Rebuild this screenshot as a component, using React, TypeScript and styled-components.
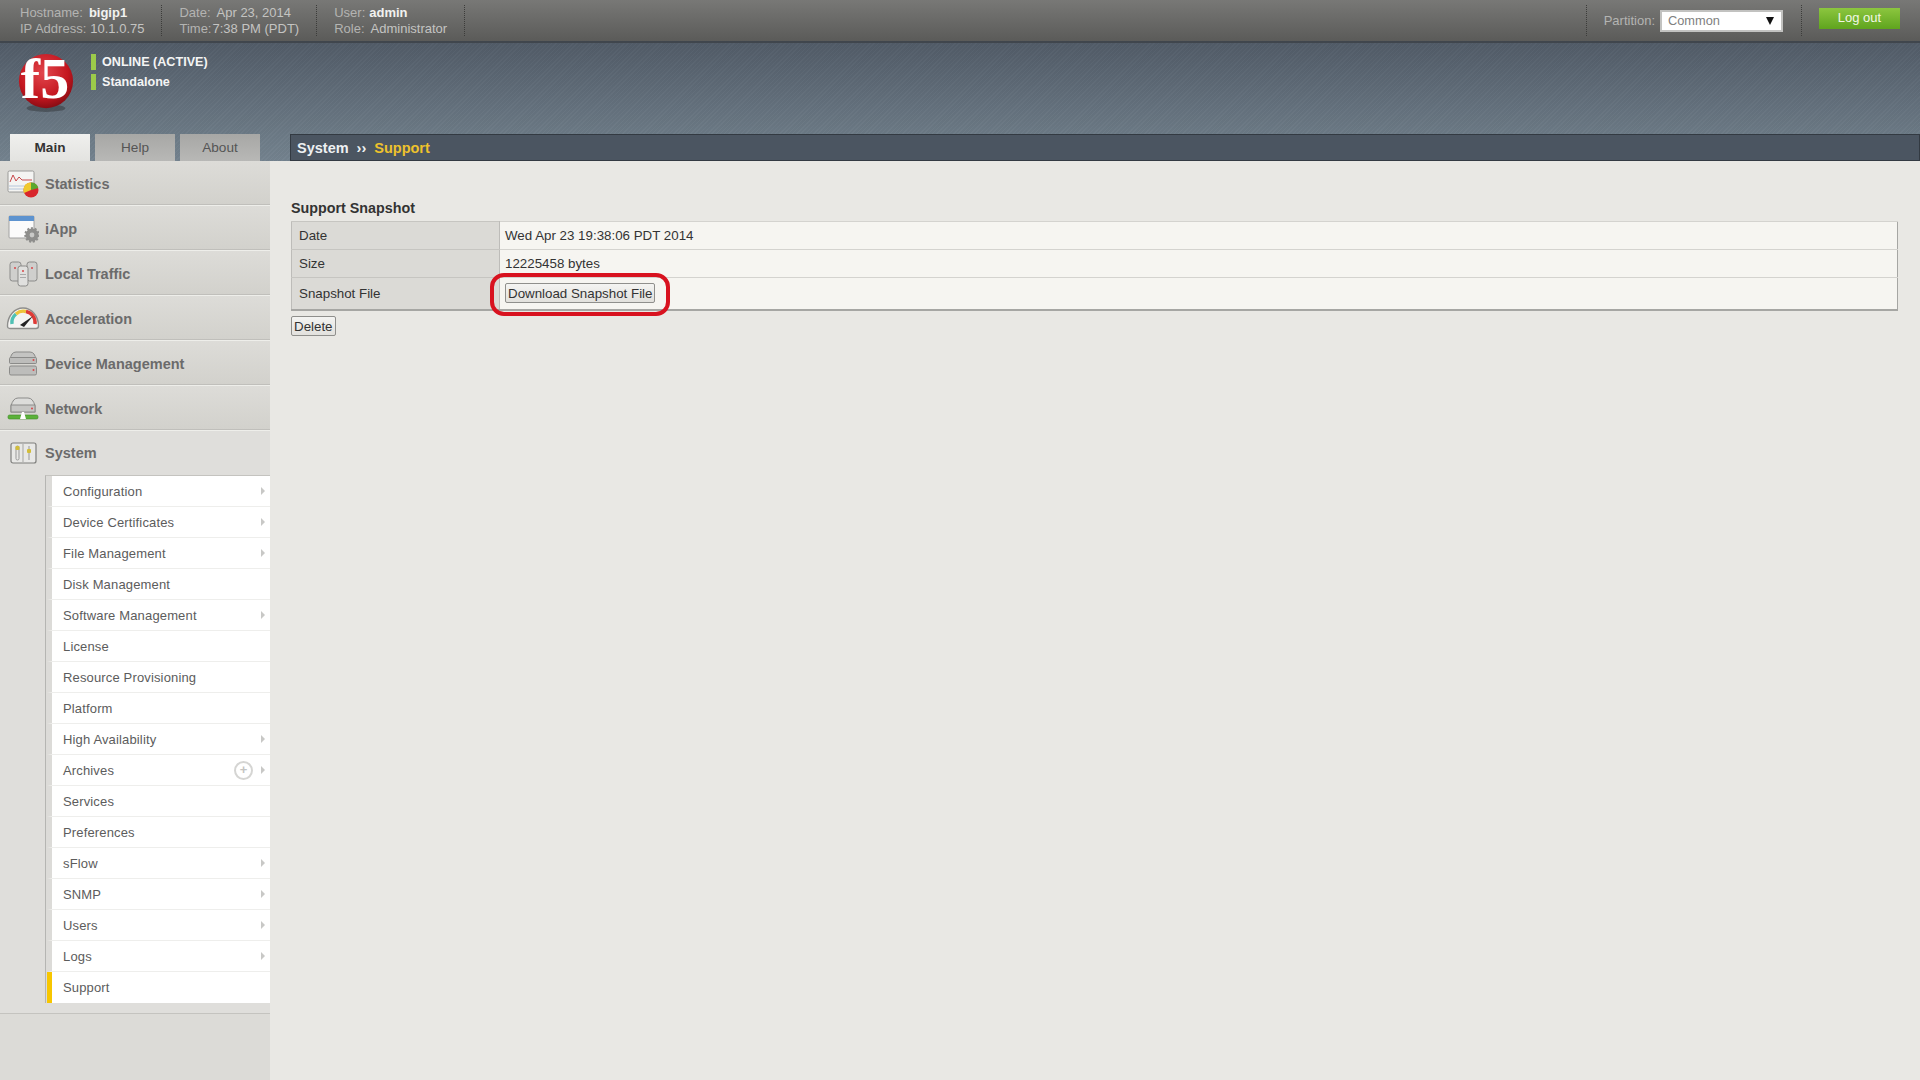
import React from 'react';
import styled, { createGlobalStyle } from 'styled-components';

const GlobalStyle = createGlobalStyle`
  html, body {
    margin: 0;
    padding: 0;
    background: #e9e8e4;
  }
  body {
    font-family: "Liberation Sans", Arial, sans-serif;
  }
`;

const stripes = `repeating-linear-gradient(135deg, rgba(255,255,255,0.02) 0 1px, rgba(0,0,0,0.02) 1px 3px)`;

const StatisticsIcon = () => (
  <svg width="32" height="28" viewBox="0 0 32 28">
    <rect x="1" y="1" width="26" height="21" rx="1.5" fill="#f4f4f2" stroke="#9a9a98" />
    <rect x="2" y="15" width="24" height="2" fill="#d5dde6" />
    <rect x="2" y="18" width="24" height="2" fill="#d5dde6" />
    <path d="M3 12 L6 5 L9 11 L12 7 L15 10 L25 10" fill="none" stroke="#c8494c" strokeWidth="1" />
    <circle cx="24" cy="20" r="7.5" fill="#d8262c" />
    <path d="M24 20 L24 12.5 A7.5 7.5 0 0 1 31.3 18 Z" fill="#5aa82f" />
    <path d="M24 20 L24 12.5 A7.5 7.5 0 0 0 17 23 Z" fill="#efc92e" />
  </svg>
);

const AppIcon = () => (
  <svg width="32" height="28" viewBox="0 0 32 28">
    <rect x="2" y="1" width="25" height="22" rx="1" fill="#fbfbfb" stroke="#a2a2a2" />
    <rect x="2" y="1" width="25" height="5" fill="#5d93cf" />
    <circle cx="25" cy="20" r="6.5" fill="#8e8e8c" stroke="#8e8e8c" strokeWidth="2.5" strokeDasharray="2 1.6" />
    <circle cx="25" cy="20" r="5.6" fill="#8e8e8c" />
    <circle cx="25" cy="20" r="2.4" fill="#c9c9c7" />
  </svg>
);

const TrafficIcon = () => (
  <svg width="32" height="28" viewBox="0 0 32 28">
    <rect x="3" y="2" width="11" height="19" rx="2.5" fill="#cfcfcd" stroke="#8b8b89" />
    <rect x="20" y="2" width="10" height="19" rx="2.5" fill="#cfcfcd" stroke="#8b8b89" />
    <rect x="11" y="6" width="10" height="20" rx="2.5" fill="#e0e0de" stroke="#8b8b89" />
    <circle cx="16" cy="11" r="1" fill="#d8484a" />
    <circle cx="8" cy="8" r="1" fill="#d8484a" />
    <circle cx="25" cy="8" r="1" fill="#d8484a" />
    <rect x="13" y="14" width="6" height="1" fill="#aaa" />
    <rect x="13" y="17" width="6" height="1" fill="#aaa" />
  </svg>
);

const GaugeIcon = () => (
  <svg width="34" height="26" viewBox="0 0 34 26">
    <path d="M1.5 20 A15.5 18 0 0 1 32.5 20 Q32.5 22.5 30 22.5 H4 Q1.5 22.5 1.5 20 Z" fill="#f4f4f2" stroke="#8e8e8c" strokeWidth="1.4" />
    <path d="M6 18 A11 11 0 0 1 10 8" fill="none" stroke="#4fc0b4" strokeWidth="3.4" />
    <path d="M10 8 A11 11 0 0 1 20 5.5" fill="none" stroke="#eec43a" strokeWidth="3.4" />
    <path d="M20 5.5 A11 11 0 0 1 29 18" fill="none" stroke="#de3b36" strokeWidth="3.4" />
    <path d="M14 19 L27 10 L18 21 Z" fill="#222" />
  </svg>
);

const DeviceIcon = () => (
  <svg width="30" height="26" viewBox="0 0 30 26">
    <path d="M2 9 Q3 1 8 1 H22 Q27 1 28 9 V12 H2 Z" fill="#c4c4c2" stroke="#8b8b89" />
    <rect x="1.5" y="6.5" width="27" height="6" rx="1" fill="#bdbdbb" stroke="#8b8b89" />
    <rect x="1.5" y="15" width="27" height="9" rx="1.5" fill="#bdbdbb" stroke="#8b8b89" />
    <circle cx="25.5" cy="9" r="1" fill="#d8484a" />
    <circle cx="25.5" cy="19" r="1" fill="#d8484a" />
  </svg>
);

const NetworkIcon = () => (
  <svg width="32" height="24" viewBox="0 0 32 24">
    <path d="M4 15 V9 Q6 1 11 1 H21 Q26 1 28 9 V15 Z" fill="#dcdcda" stroke="#8b8b89" />
    <rect x="4" y="8" width="24" height="7" fill="#c6c6c4" stroke="#8b8b89" />
    <circle cx="25" cy="11.5" r="1" fill="#d8484a" />
    <rect x="1" y="18" width="30" height="4" rx="1.5" fill="#5bb13a" stroke="#3f8c2a" strokeWidth="0.6" />
    <path d="M13 22 L15 15 H17 L19 22 Z" fill="#fff" />
  </svg>
);

const SystemIcon = () => (
  <svg width="28" height="24" viewBox="0 0 28 24">
    <rect x="2" y="2" width="25" height="20" rx="2" fill="#e8e8e6" stroke="#7f7f7d" strokeWidth="1.2" />
    <line x1="14" y1="3" x2="14" y2="21" stroke="#a5a5a3" />
    <rect x="7" y="5" width="3" height="14" rx="1.4" fill="none" stroke="#999" />
    <rect x="6.5" y="5" width="4" height="4" rx="1" fill="#d2bd3a" />
    <line x1="20" y1="5" x2="20" y2="19" stroke="#999" />
    <rect x="18" y="8" width="4" height="4" rx="1" fill="#d2bd3a" />
  </svg>
);

const menu = [
  { label: 'Statistics', icon: <StatisticsIcon /> },
  { label: 'iApp', icon: <AppIcon /> },
  { label: 'Local Traffic', icon: <TrafficIcon /> },
  { label: 'Acceleration', icon: <GaugeIcon /> },
  { label: 'Device Management', icon: <DeviceIcon /> },
  { label: 'Network', icon: <NetworkIcon /> },
];

const subMenu = [
  { label: 'Configuration', more: true },
  { label: 'Device Certificates', more: true },
  { label: 'File Management', more: true },
  { label: 'Disk Management' },
  { label: 'Software Management', more: true },
  { label: 'License' },
  { label: 'Resource Provisioning' },
  { label: 'Platform' },
  { label: 'High Availability', more: true },
  { label: 'Archives', more: true, add: true },
  { label: 'Services' },
  { label: 'Preferences' },
  { label: 'sFlow', more: true },
  { label: 'SNMP', more: true },
  { label: 'Users', more: true },
  { label: 'Logs', more: true },
  { label: 'Support', active: true },
];

const App: React.FC = () => (
  <Page>
    <GlobalStyle />
    <TopBar>
      <InfoGroup>
        <InfoLine><InfoLabel>Hostname:</InfoLabel><InfoStrong>bigip1</InfoStrong></InfoLine>
        <InfoLine $gap={4}><InfoLabel>IP Address:</InfoLabel><InfoValue>10.1.0.75</InfoValue></InfoLine>
      </InfoGroup>
      <InfoGroup>
        <InfoLine><InfoLabel>Date:</InfoLabel><InfoValue>Apr 23, 2014</InfoValue></InfoLine>
        <InfoLine $gap={1}><InfoLabel>Time:</InfoLabel><InfoValue>7:38 PM (PDT)</InfoValue></InfoLine>
      </InfoGroup>
      <InfoGroup>
        <InfoLine $gap={4}><InfoLabel>User:</InfoLabel><InfoStrong>admin</InfoStrong></InfoLine>
        <InfoLine><InfoLabel>Role:</InfoLabel><InfoValue>Administrator</InfoValue></InfoLine>
      </InfoGroup>
      <TopRight>
        <PartitionGroup>
          <InfoLabel>Partition:</InfoLabel>
          <PartitionSelect>
            Common
            <SelectArrow />
          </PartitionSelect>
        </PartitionGroup>
        <LogOut>Log out</LogOut>
      </TopRight>
    </TopBar>
    <Header>
      <Brand>
        <Logo viewBox="0 0 60 62">
          <defs>
            <radialGradient id="ball" cx="45%" cy="35%" r="65%">
              <stop offset="0%" stopColor="#e2474d" />
              <stop offset="70%" stopColor="#c4161f" />
              <stop offset="100%" stopColor="#8a0d14" />
            </radialGradient>
          </defs>
          <ellipse cx="30" cy="57" rx="20" ry="4" fill="#3a3f45" opacity="0.6" />
          <circle cx="30" cy="29" r="28" fill="url(#ball)" />
          <text x="4" y="47" fontFamily="Liberation Serif, serif" fontWeight="700" fontSize="60" fill="#fff">f5</text>
        </Logo>
        <Status>
          <StatusLine>ONLINE (ACTIVE)</StatusLine>
          <StatusLine>Standalone</StatusLine>
        </Status>
      </Brand>
      <NavRow>
        <Tabs>
          <Tab $active>Main</Tab>
          <Tab>Help</Tab>
          <Tab>About</Tab>
        </Tabs>
        <Breadcrumb>
          System<Chevrons>››</Chevrons><Current>Support</Current>
        </Breadcrumb>
      </NavRow>
    </Header>
    <Body>
      <Sidebar>
        {menu.map((m) => (
          <MenuItem key={m.label}>
            <MenuIcon>{m.icon}</MenuIcon>
            {m.label}
          </MenuItem>
        ))}
        <OpenSection>
          <OpenHead>
            <MenuIcon><SystemIcon /></MenuIcon>
            System
          </OpenHead>
          <SubList>
            {subMenu.map((s) => (
              <SubItem key={s.label} $active={s.active}>
                <SubLabel>{s.label}</SubLabel>
                {s.add && <AddButton>+</AddButton>}
                {s.more && <MoreArrow />}
              </SubItem>
            ))}
          </SubList>
        </OpenSection>
      </Sidebar>
      <Content>
        <SectionTitle>Support Snapshot</SectionTitle>
        <Table>
          <tbody>
            <tr>
              <LabelCell>Date</LabelCell>
              <ValueCell>Wed Apr 23 19:38:06 PDT 2014</ValueCell>
            </tr>
            <tr>
              <LabelCell>Size</LabelCell>
              <ValueCell>12225458 bytes</ValueCell>
            </tr>
            <FileRow>
              <LabelCell>Snapshot File</LabelCell>
              <ValueCell>
                <Callout>
                  <Button>Download Snapshot File</Button>
                  <Highlight />
                </Callout>
              </ValueCell>
            </FileRow>
          </tbody>
        </Table>
        <Button>Delete</Button>
      </Content>
    </Body>
  </Page>
);
export default App;


const Page = styled.div`
  display: flex;
  flex-direction: column;
  width: 1920px;
  height: 1080px;
  overflow: hidden;
`;
const TopBar = styled.div`
  box-sizing: border-box;
  display: flex;
  align-items: stretch;
  height: 43px;
  padding: 5px 0 5px 20px;
  background: linear-gradient(#787876, #5b5b59);
  border-bottom: 2px solid #40464d;
  font-size: 13px;
`;
const InfoGroup = styled.div`
  display: flex;
  flex-direction: column;
  justify-content: center;
  gap: 1px;
  padding-right: 17px;
  margin-right: 17px;
  border-right: 1px dotted #3c3c3a;
`;
const InfoLine = styled.div<{ $gap?: number }>`
  display: flex;
  gap: ${(p) => p.$gap ?? 6}px;
  line-height: 15px;
  white-space: nowrap;
`;
const InfoLabel = styled.span`
  color: #b4b4b2;
`;
const InfoValue = styled.span`
  color: #c4c4c2;
`;
const InfoStrong = styled.span`
  color: #f2f2f0;
  font-weight: 700;
`;
const TopRight = styled.div`
  display: flex;
  align-items: center;
  margin-left: auto;
`;
const PartitionGroup = styled.div`
  display: flex;
  align-items: center;
  align-self: stretch;
  gap: 5px;
  padding: 0 18px 0 17px;
  border-left: 1px dotted #3c3c3a;
  border-right: 1px dotted #3c3c3a;
`;
const PartitionSelect = styled.div`
  position: relative;
  box-sizing: border-box;
  width: 123px;
  height: 22px;
  padding-left: 6px;
  background: #fff;
  border: 2px solid #c2c2c0;
  color: #808080;
  font-size: 12.8px;
  line-height: 18px;
`;
const SelectArrow = styled.span`
  position: absolute;
  top: 5px;
  right: 7px;
  border-left: 4px solid transparent;
  border-right: 4px solid transparent;
  border-top: 8px solid #111;
`;
const LogOut = styled.div`
  width: 81px;
  height: 21px;
  margin: 0 20px 4px 17px;
  background: linear-gradient(#8cc63f, #5fa41e);
  color: #f2f7e6;
  text-align: center;
  font-size: 13px;
  line-height: 20px;
`;
const Header = styled.div`
  display: flex;
  flex-direction: column;
  height: 118px;
  background: ${stripes}, linear-gradient(#525c68, #74838f);
`;
const Brand = styled.div`
  display: flex;
  align-items: flex-start;
  flex: 1;
  padding: 10px 0 0 17px;
`;
const Logo = styled.svg`
  width: 58px;
  height: 60px;
`;
const Status = styled.div`
  display: flex;
  flex-direction: column;
  gap: 4px;
  margin: 1px 0 0 16px;
`;
const StatusLine = styled.div`
  height: 16px;
  padding-left: 6px;
  border-left: 5px solid #9ccb4a;
  color: #f4f4f4;
  font-size: 12.6px;
  font-weight: 700;
  line-height: 16px;
`;
const NavRow = styled.div`
  display: flex;
  align-items: flex-end;
  height: 27px;
`;
const Tabs = styled.div`
  display: flex;
  gap: 5px;
  box-sizing: border-box;
  width: 290px;
  padding-left: 10px;
`;
const Tab = styled.div<{ $active?: boolean }>`
  width: 80px;
  height: 27px;
  background: ${(p) => (p.$active ? 'linear-gradient(#f0f0ee, #e3e3e0)' : 'linear-gradient(#a7a7a5, #b8b8b6)')};
  color: ${(p) => (p.$active ? '#333' : '#555')};
  font-size: 13.6px;
  font-weight: ${(p) => (p.$active ? 700 : 400)};
  text-align: center;
  line-height: 27px;
`;
const Breadcrumb = styled.div`
  flex: 1;
  box-sizing: border-box;
  height: 27px;
  padding-left: 6px;
  background: #4b5561;
  border: 1px solid #333a42;
  color: #eef0f2;
  font-size: 14.5px;
  font-weight: 700;
  line-height: 26px;
`;
const Chevrons = styled.span`
  margin: 0 8px;
`;
const Current = styled.span`
  color: #eec22c;
`;
const Body = styled.div`
  display: flex;
  flex: 1;
`;
const Sidebar = styled.div`
  width: 270px;
  flex: none;
  background: #dcdbd7;
`;
const MenuItem = styled.div`
  display: flex;
  align-items: center;
  box-sizing: border-box;
  height: 45px;
  padding-top: 1px;
  background: linear-gradient(#dddcd8, #d2d1cc);
  border-bottom: 1px solid #eeeeea;
  box-shadow: inset 0 -1px 0 #c0bfbb;
  color: #6b6b6b;
  font-size: 14.5px;
  font-weight: 700;
`;
const MenuIcon = styled.span`
  display: flex;
  justify-content: center;
  width: 45px;
  flex: none;
`;
const OpenSection = styled.div`
  padding-bottom: 10px;
  border-bottom: 1px solid #c4c3bf;
  background: #dfdedb;
`;
const OpenHead = styled.div`
  display: flex;
  align-items: center;
  height: 44px;
  color: #6b6b6b;
  font-size: 14.5px;
  font-weight: 700;
`;
const SubList = styled.div`
  margin-left: 45px;
  padding-left: 1px;
  border-left: 1px solid #b5b5b2;
  border-top: 1px solid #c4c3bf;
  background: #dcdbd8;
`;
const SubItem = styled.div<{ $active?: boolean }>`
  display: flex;
  align-items: center;
  box-sizing: border-box;
  height: 31px;
  padding-left: 11px;
  padding-right: 5px;
  background: #fff;
  border-left: 5px solid ${(p) => (p.$active ? '#f7c600' : '#dcdbd8')};
  border-bottom: ${(p) => (p.$active ? 'none' : '1px solid #eeeeec')};
  color: #5c5c5c;
  font-size: 13px;
`;
const SubLabel = styled.span`
  flex: 1;
  letter-spacing: 0.15px;
`;
const AddButton = styled.span`
  box-sizing: border-box;
  width: 19px;
  height: 19px;
  margin-right: 8px;
  border: 2px solid #d5d5d3;
  border-radius: 50%;
  color: #c4c4c2;
  font-size: 13px;
  font-weight: 700;
  line-height: 14px;
  text-align: center;
`;
const MoreArrow = styled.span`
  border-top: 4px solid transparent;
  border-bottom: 4px solid transparent;
  border-left: 4px solid #c8c8c6;
`;
const Content = styled.div`
  flex: 1;
  padding: 39px 22px 0 21px;
  background: #e9e8e4;
`;
const SectionTitle = styled.div`
  margin-bottom: 5px;
  color: #333;
  font-size: 14.3px;
  font-weight: 700;
  line-height: 16px;
`;
const Table = styled.table`
  width: 100%;
  margin-bottom: 5px;
  border-collapse: collapse;
  border: 1px solid #a6a6a3;
  border-bottom-width: 2px;
  font-size: 13.33px;
  color: #333;
`;
const LabelCell = styled.td`
  box-sizing: border-box;
  width: 208px;
  height: 27px;
  padding: 0 7px;
  background: #dbdad6;
  border: 1px solid #bdbcb9;
  border-color: #c6c5c1 #bdbcb9;
`;
const ValueCell = styled.td`
  height: 27px;
  padding: 0 5px;
  background: #f6f5f1;
  border-top: 1px solid #d4d3cf;
`;
const FileRow = styled.tr`
  td {
    height: 30px;
    padding-bottom: 1px;
  }
`;
const Callout = styled.span`
  position: relative;
  display: inline-block;
  vertical-align: middle;
`;
const Highlight = styled.span`
  position: absolute;
  top: -10px;
  left: -15px;
  right: -15px;
  bottom: -13px;
  border: 4px solid #d8121f;
  border-radius: 14px;
  pointer-events: none;
`;
const Button = styled.button`
  display: block;
  box-sizing: border-box;
  height: 20px;
  padding: 0 2px;
  background: linear-gradient(#f4f4f2, #e2e1dd);
  border: 1px solid #8f8f8c;
  border-radius: 2px;
  color: #333;
  font-family: inherit;
  font-size: 13.33px;
  line-height: 17px;
`;
